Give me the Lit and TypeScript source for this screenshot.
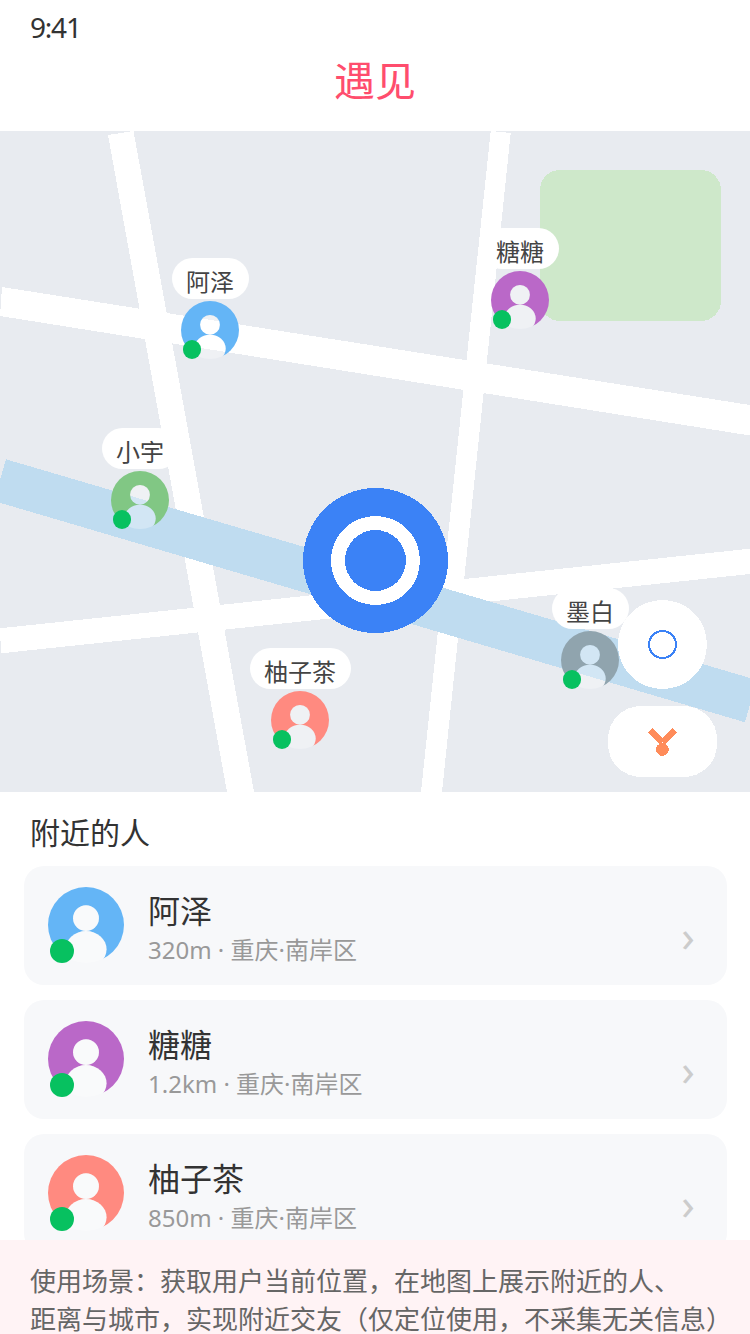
import {LitElement, css, html, svg} from 'lit';
import {customElement, property} from 'lit/decorators.js';

// Avatar: coloured disc with the person cut out, so the map shows through it.
@customElement('user-avatar')
export class UserAvatar extends LitElement {
  @property({type: String}) color = '#64b5f6';

  static styles = css`
    :host {
      display: block;
      position: relative;
      width: 58px;
      height: 58px;
    }
    svg {
      display: block;
      width: 100%;
      height: 100%;
    }
    .dot {
      position: absolute;
      left: 2.6%;
      bottom: 0;
      width: 32%;
      height: 32%;
      border-radius: 50%;
      background: #07c160;
    }
  `;

  render() {
    return html`
      <svg viewBox="0 0 100 100">
        <defs>
          <mask id="cut">
            <rect width="100" height="100" fill="#fff"></rect>
            <circle cx="50" cy="41" r="17" fill="#000"></circle>
            <ellipse cx="50" cy="82" rx="27" ry="24" fill="#000"></ellipse>
          </mask>
          <clipPath id="disc"><circle cx="50" cy="50" r="50"></circle></clipPath>
        </defs>
        <circle cx="50" cy="50" r="50" fill=${this.color} mask="url(#cut)"></circle>
        <g clip-path="url(#disc)" fill="#fff" fill-opacity="0.3">
          <circle cx="50" cy="41" r="17"></circle>
          <ellipse cx="50" cy="82" rx="27" ry="24"></ellipse>
        </g>
      </svg>
      <span class="dot"></span>
    `;
  }
}

const MARKERS = [
  {name: '阿泽', x: 210, y: 127, color: '#64b5f6'},
  {name: '糖糖', x: 520, y: 97, color: '#ba68c8'},
  {name: '小宇', x: 140, y: 297, color: '#81c784'},
  {name: '柚子茶', x: 300, y: 517, color: '#ff8a80'},
  {name: '墨白', x: 590, y: 457, color: '#90a4ae'},
];

const PEOPLE = [
  {name: '阿泽', meta: '320m · 重庆·南岸区', color: '#64b5f6'},
  {name: '糖糖', meta: '1.2km · 重庆·南岸区', color: '#ba68c8'},
  {name: '柚子茶', meta: '850m · 重庆·南岸区', color: '#ff8a80'},
];

@customElement('app-root')
export class AppRoot extends LitElement {
  static styles = css`
    :host {
      display: block;
      width: 750px;
      height: 1334px;
      background: #fff;
      font-family: "Noto Sans", "Noto Sans CJK SC", sans-serif;
      color: #333;
    }
    .page {
      display: flex;
      flex-direction: column;
      height: 1334px;
      overflow: hidden;
    }
    .header {
      height: 131px;
      flex: none;
      display: flex;
      flex-direction: column;
      background: #fff;
    }
    .time {
      padding: 7px 30px 0;
      font-size: 28px;
      line-height: 40px;
      letter-spacing: -1.2px;
      color: #333;
    }
    .title {
      margin-top: 8px;
      text-align: center;
      font-size: 41px;
      line-height: 50px;
      color: #ff4d6d;
    }
    .map {
      position: relative;
      flex: none;
      height: 661px;
      overflow: hidden;
      background: #e8ebf0;
    }
    .base {
      position: absolute;
      inset: 0;
      width: 750px;
      height: 661px;
    }
    .marker {
      position: absolute;
      display: flex;
      flex-direction: column;
      align-items: center;
      gap: 2px;
      transform: translateX(-50%);
    }
    .marker__label {
      height: 41px;
      margin-right: -1px;
      padding: 0 15px 0 14px;
      border-radius: 21px;
      background: #fff;
      font-size: 24px;
      line-height: 48px;
      color: #444;
      white-space: nowrap;
    }
    .control {
      position: absolute;
      display: block;
    }
    .control--locate {
      left: 618px;
      top: 469px;
      width: 89px;
      height: 89px;
    }
    .control--medal {
      left: 608px;
      top: 575px;
      width: 109px;
      height: 71px;
    }
    .nearby {
      flex: 1;
      min-height: 0;
      overflow: hidden;
      padding: 21px 23px 0 24px;
    }
    .nearby__title {
      margin: 0 0 13px 6px;
      font-size: 30px;
      font-weight: 400;
      line-height: 40px;
      color: #333;
    }
    .card {
      display: flex;
      gap: 24px;
      box-sizing: border-box;
      height: 119px;
      margin-bottom: 15px;
      padding: 21px 32px 0 24px;
      border-radius: 20px;
      background: #f7f8fa;
    }
    .card user-avatar {
      flex: none;
      width: 76px;
      height: 76px;
    }
    .card__text {
      margin-top: 2px;
    }
    .card__name {
      font-size: 32px;
      line-height: 44px;
      color: #333;
    }
    .card__meta {
      font-size: 24px;
      line-height: 34px;
      color: #999;
    }
    .card__chevron {
      margin-left: auto;
      font-size: 44px;
      line-height: 96px;
      color: #ccc;
    }
    .notice {
      flex: none;
      display: flex;
      flex-direction: column;
      gap: 8px;
      box-sizing: border-box;
      height: 94px;
      padding: 26px 0 0 30px;
      background: #fff3f5;
      font-size: 26px;
      line-height: 30px;
      color: #666;
      white-space: nowrap;
    }
  `;

  renderBaseMap() {
    return html`
      <svg class="base" viewBox="0 0 750 661" shape-rendering="crispEdges">
        ${svg`
          <rect x="540" y="39" width="181" height="151" rx="20" fill="#cee8ca"></rect>
          <g fill="#fff">
            <polygon points="108,4 133.5,0 254,661 227,661"></polygon>
            <polygon points="490.7,0 510.7,2 442,661 421,661"></polygon>
            <polygon points="2,156 750,274 750,304.5 0,185"></polygon>
            <polygon points="0,497.3 750,417.7 750,443 1,522.3"></polygon>
          </g>
          <polygon points="6,328.3 757,549 745,591.3 -6,370" fill="#bfdcf0"></polygon>
          <circle cx="375.5" cy="429.5" r="72.5" fill="#3b82f6"></circle>
          <circle cx="375.5" cy="429.5" r="44.5" fill="#fff"></circle>
          <circle cx="375.5" cy="429.5" r="30.5" fill="#3b82f6"></circle>
        `}
      </svg>
    `;
  }

  render() {
    return html`
      <div class="page">
        <header class="header">
          <div class="time">9:41</div>
          <div class="title">遇见</div>
        </header>

        <section class="map">
          ${this.renderBaseMap()}
          ${MARKERS.map(
            (m) => html`
              <div class="marker" style="left:${m.x}px;top:${m.y}px">
                <div class="marker__label">${m.name}</div>
                <user-avatar .color=${m.color}></user-avatar>
              </div>
            `
          )}
          <svg class="control control--locate" viewBox="0 0 89 89" shape-rendering="crispEdges">
            <circle cx="44.5" cy="44.5" r="44.5" fill="#fff"></circle>
            <circle cx="44.5" cy="44.5" r="13.5" fill="none" stroke="#3b82f6" stroke-width="2"></circle>
          </svg>
          <svg class="control control--medal" viewBox="0 0 109 71" shape-rendering="crispEdges">
            <rect width="109" height="71" rx="33" fill="#fff"></rect>
            <path d="M42.5 24.5 54.5 36.5 66.5 24.5" fill="none" stroke="#ff8c5a" stroke-width="6"></path>
            <circle cx="54.4" cy="43.5" r="6.4" fill="#ff8c5a"></circle>
          </svg>
        </section>

        <section class="nearby">
          <h2 class="nearby__title">附近的人</h2>
          ${PEOPLE.map(
            (p) => html`
              <div class="card">
                <user-avatar .color=${p.color}></user-avatar>
                <div class="card__text">
                  <div class="card__name">${p.name}</div>
                  <div class="card__meta">${p.meta}</div>
                </div>
                <div class="card__chevron">›</div>
              </div>
            `
          )}
        </section>

        <footer class="notice">
          <div>使用场景：获取用户当前位置，在地图上展示附近的人、</div>
          <div>距离与城市，实现附近交友（仅定位使用，不采集无关信息）</div>
        </footer>
      </div>
    `;
  }
}
